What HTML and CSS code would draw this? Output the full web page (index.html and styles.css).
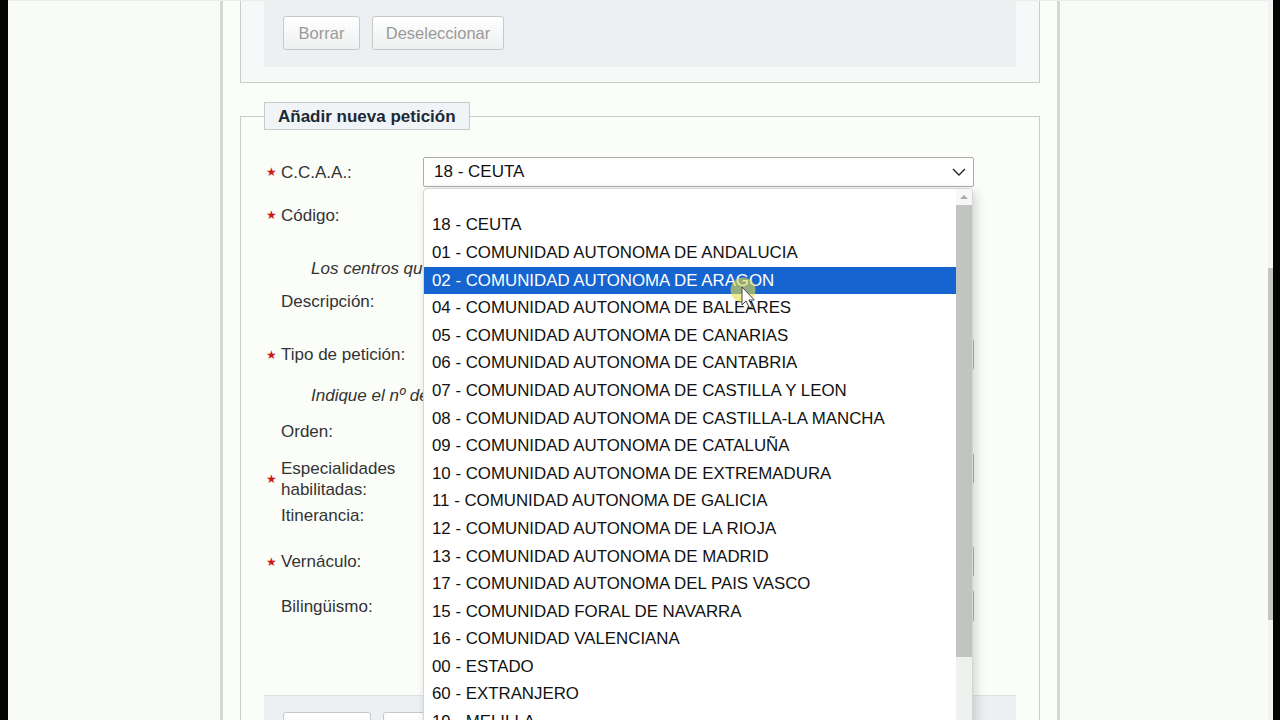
FILE: index.html
```html
<!DOCTYPE html>
<html lang="es">
<head>
<meta charset="utf-8">
<title>Añadir nueva petición</title>
<link rel="stylesheet" href="styles.css">
</head>
<body>
<div class="edge-left"></div>
<div class="page">
  <div class="column">
    <div class="fs-top">
      <div class="actions">
        <button class="btn w-borrar">Borrar</button>
        <button class="btn w-desel">Deseleccionar</button>
      </div>
    </div>

    <fieldset class="fs-form">
      <legend class="legend">Añadir nueva petición</legend>

      <div class="row r-ccaa">
        <div class="label"><span class="req">★</span>C.C.A.A.:</div>
        <div class="ctrl">
          <div class="select">
            <span>18 - CEUTA</span>
            <svg class="chev" width="14" height="8" viewBox="0 0 14 8"><path d="M1 1 L7 7 L13 1" fill="none" stroke="#222" stroke-width="1.4"/></svg>
          </div>
          <div class="dropdown">
            <div class="list">
              <div class="opt blank"></div>
              <div class="opt">18 - CEUTA</div>
              <div class="opt">01 - COMUNIDAD AUTONOMA DE ANDALUCIA</div>
              <div class="opt sel">02 - COMUNIDAD AUTONOMA DE ARAGON</div>
              <div class="opt">04 - COMUNIDAD AUTONOMA DE BALEARES</div>
              <div class="opt">05 - COMUNIDAD AUTONOMA DE CANARIAS</div>
              <div class="opt">06 - COMUNIDAD AUTONOMA DE CANTABRIA</div>
              <div class="opt">07 - COMUNIDAD AUTONOMA DE CASTILLA Y LEON</div>
              <div class="opt">08 - COMUNIDAD AUTONOMA DE CASTILLA-LA MANCHA</div>
              <div class="opt">09 - COMUNIDAD AUTONOMA DE CATALUÑA</div>
              <div class="opt">10 - COMUNIDAD AUTONOMA DE EXTREMADURA</div>
              <div class="opt">11 - COMUNIDAD AUTONOMA DE GALICIA</div>
              <div class="opt">12 - COMUNIDAD AUTONOMA DE LA RIOJA</div>
              <div class="opt">13 - COMUNIDAD AUTONOMA DE MADRID</div>
              <div class="opt">17 - COMUNIDAD AUTONOMA DEL PAIS VASCO</div>
              <div class="opt">15 - COMUNIDAD FORAL DE NAVARRA</div>
              <div class="opt">16 - COMUNIDAD VALENCIANA</div>
              <div class="opt">00 - ESTADO</div>
              <div class="opt">60 - EXTRANJERO</div>
              <div class="opt">19 - MELILLA</div>
              <div class="opt">14 - REGION DE MURCIA</div>
            </div>
            <div class="sbar">
              <div class="sbar-up"><svg width="10" height="6" viewBox="0 0 10 6"><path d="M1 5 L5 1 L9 5 Z" fill="#a8aca8"/></svg></div>
              <div class="sbar-thumb"></div>
              <div class="sbar-track"></div>
            </div>
          </div>
        </div>
      </div>

      <div class="row r-codigo">
        <div class="label"><span class="req">★</span>Código:</div>
        <div class="ctrl"><div class="input short"></div></div>
      </div>

      <div class="note n-centros">Los centros que no aparezcan en la lista no admiten peticiones.</div>

      <div class="row r-desc">
        <div class="label"><span class="req"></span>Descripción:</div>
        <div class="ctrl"><div class="input mid"></div></div>
      </div>

      <div class="row r-tipo">
        <div class="label"><span class="req">★</span>Tipo de petición:</div>
        <div class="ctrl"><div class="input full"></div></div>
      </div>

      <div class="note n-indique">Indique el nº de orden de la petición.</div>

      <div class="row r-orden">
        <div class="label"><span class="req"></span>Orden:</div>
        <div class="ctrl"><div class="input short"></div></div>
      </div>

      <div class="row r-esp">
        <div class="label"><span class="req">★</span><span>Especialidades<br>habilitadas:</span></div>
        <div class="ctrl"><div class="input full"></div></div>
      </div>

      <div class="row r-itin">
        <div class="label"><span class="req"></span>Itinerancia:</div>
        <div class="ctrl"></div>
      </div>

      <div class="row r-vern">
        <div class="label"><span class="req">★</span>Vernáculo:</div>
        <div class="ctrl"><div class="input full"></div></div>
      </div>

      <div class="row r-bil">
        <div class="label"><span class="req"></span>Bilingüismo:</div>
        <div class="ctrl"><div class="input full tall"></div></div>
      </div>

      <div class="actions bottom">
        <button class="btn b1">Añadir</button>
        <button class="btn">Limpiar</button>
      </div>
    </fieldset>
  </div>

  <svg class="cursor" width="32" height="40" viewBox="0 0 32 40">
    <circle cx="13" cy="13" r="12.5" fill="rgba(232,222,70,0.6)"/>
    <path d="M12 10 L12 28 L16 24 L19.5 31 L22.3 29.7 L18.9 23 L24.3 23 Z" fill="#fff" stroke="#444" stroke-width="1" stroke-linejoin="round"/>
  </svg>
</div>
<div class="edge-right">
  <div class="pscroll"><div class="pthumb"></div></div>
  <div class="pblack"></div>
</div>
</body>
</html>
```

FILE: styles.css
```css
html, body {
  margin: 0;
  padding: 0;
}
body {
  width: 1280px;
  height: 720px;
  overflow: hidden;
  display: flex;
  font-family: "Liberation Sans", Arial, sans-serif;
  font-size: 17px;
  color: #333;
  background: #f9fbf7;
}
.edge-left {
  width: 8px;
  flex: none;
  background: #050505;
}
.edge-right {
  width: 12px;
  flex: none;
  display: flex;
}
.pscroll {
  width: 5px;
  background: #f3f4f2;
}
.pthumb {
  margin-top: 268px;
  height: 352px;
  background: #c4c6c4;
}
.pblack {
  flex: 1;
  background: #050505;
}
.page {
  flex: 1;
  position: relative;
  padding-left: 212px;
  background: #f9fbf7;
  border-top: 1px solid #eceeec;
  box-sizing: border-box;
  height: 720px;
}
.column {
  width: 800px;
  height: 720px;
  padding: 0 17px;
  border-left: 3px solid #d6dad6;
  border-right: 3px solid #d6dad6;
  background: #fbfdf9;
}

/* top fieldset (cut by scroll) */
.fs-top {
  border: 1px solid #c9cdc9;
  border-top: none;
  padding: 0 23px 15px;
  background: #f7f9f9;
}
.actions {
  height: 66px;
  box-sizing: border-box;
  padding: 15px 19px 0;
  background: #ecf0f3;
  display: flex;
  gap: 12px;
  align-items: flex-start;
}
.btn {
  height: 34px;
  padding: 0 12px;
  font-family: "Liberation Sans", Arial, sans-serif;
  font-size: 16.5px;
  color: #9b9b9b;
  background: linear-gradient(#ffffff, #eef0ef);
  border: 1px solid #c6c9c6;
  border-radius: 3px;
}
.w-borrar { width: 77px; }
.w-desel { width: 132px; }

/* main fieldset */
.fs-form {
  margin: 19px 0 0;
  padding: 27px 23px 0;
  border: 1px solid #c9cdc9;
  min-width: 0;
}
.legend {
  padding: 4px 13px;
  height: 28px;
  box-sizing: border-box;
  line-height: 20px;
  font-weight: bold;
  font-size: 17px;
  color: #1c2836;
  background: #f1f4f6;
  border: 1px solid #c6cac8;
}
.row {
  display: grid;
  grid-template-columns: 159px 551px;
  align-items: center;
}
.label {
  display: flex;
  align-items: center;
  padding-left: 2px;
  line-height: 21px;
  color: #333;
}
.req {
  width: 15px;
  flex: none;
  color: #d0161a;
  font-size: 12px;
  line-height: 12px;
}
.ctrl {
  position: relative;
}
.input {
  height: 30px;
  box-sizing: border-box;
  border: 1px solid #b5b8b5;
  border-radius: 2px;
  background: #fff;
}
.input.short { width: 120px; }
.input.mid { width: 400px; }
.input.full { width: 551px; height: 31px; }
.input.tall { height: 32px; }

.r-ccaa { height: 30px; }
.r-codigo { margin-top: 13px; height: 30px; }
.note {
  font-style: italic;
  color: #333;
  line-height: 20px;
  padding-left: 47px;
}
.n-centros { margin-top: 29px; }
.r-desc { margin-top: 7px; height: 30px; }
.r-tipo { margin-top: 23px; height: 31px; }
.n-indique { margin-top: 16px; }
.r-orden { margin-top: 10px; height: 30px; }
.r-esp { margin-top: 7px; height: 47px; align-items: start; }
.r-esp .label { margin-top: 5px; }
.r-itin { margin-top: 5px; height: 20px; }
.r-vern { margin-top: 21px; height: 31px; }
.r-bil { margin-top: 13px; height: 32px; }

.actions.bottom {
  margin-top: 73px;
  height: 60px;
  padding-top: 16px;
  border-top: 1px solid #dfe3e6;
}
.actions.bottom .btn { color: #333; }
.b1 { width: 88px; }

/* select */
.select {
  height: 30px;
  box-sizing: border-box;
  border: 1px solid #a9aca9;
  border-radius: 2px;
  background: #fff;
  display: flex;
  align-items: center;
  justify-content: space-between;
  padding: 0 7px 0 10px;
  color: #111;
}
.chev { display: block; }

/* open dropdown (overlay) */
.dropdown {
  position: absolute;
  left: 0;
  top: 31px;
  width: 550px;
  height: 545px;
  box-sizing: border-box;
  background: #fff;
  border: 1px solid #d4d6d4;
  border-radius: 4px 4px 0 0;
  box-shadow: 3px 3px 12px rgba(0,0,0,0.16);
  display: flex;
  overflow: hidden;
  z-index: 5;
}
.list {
  flex: 1;
}
.opt {
  height: 27.6px;
  line-height: 28.6px;
  padding-left: 8px;
  font-size: 16.85px;
  color: #111;
  white-space: nowrap;
}
.opt.blank { height: 22.4px; }
.opt.sel {
  background: #1664cf;
  color: #fff;
}
.sbar {
  width: 16px;
  flex: none;
  display: flex;
  flex-direction: column;
}
.sbar-up {
  height: 16px;
  background: #f6f7f6;
  display: flex;
  align-items: center;
  justify-content: center;
}
.sbar-thumb {
  height: 452px;
  background: #c1c5c1;
}
.sbar-track {
  flex: 1;
  background: #eff1ee;
}

.cursor {
  position: absolute;
  left: 722px;
  top: 276px;
  z-index: 10;
}
```
